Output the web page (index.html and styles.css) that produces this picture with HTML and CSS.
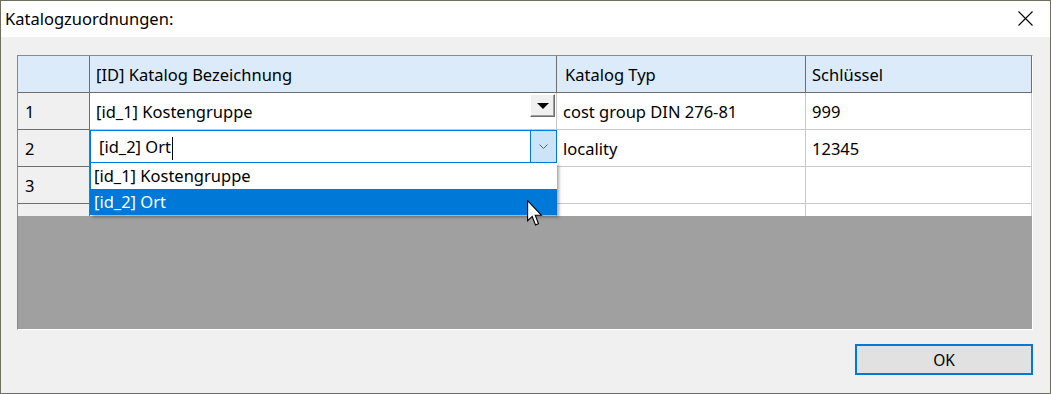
FILE: index.html
```html
<!DOCTYPE html>
<html lang="de">
<head>
<meta charset="UTF-8" />
<title>Katalogzuordnungen</title>
<link rel="stylesheet" href="styles.css">
</head>
<body>
<div class="window">
  <div class="titlebar">
    <span class="title">Katalogzuordnungen:</span>
    <svg class="close" width="15" height="15" viewBox="0 0 15 15"><path d="M0.5 0.5 L14.5 14.5 M14.5 0.5 L0.5 14.5" stroke="#000" stroke-width="1.1" fill="none"/></svg>
  </div>
  <div class="content">
    <div class="grid">
      <div class="row head">
        <div class="cell rh"></div>
        <div class="cell c1">[ID] Katalog Bezeichnung</div>
        <div class="cell c2">Katalog Typ</div>
        <div class="cell c3">Schlüssel</div>
      </div>
      <div class="row">
        <div class="cell rh">1</div>
        <div class="cell c1">[id_1] Kostengruppe
          <div class="drop-btn"><span class="tri"></span></div>
        </div>
        <div class="cell c2">cost group DIN 276-81</div>
        <div class="cell c3">999</div>
      </div>
      <div class="row">
        <div class="cell rh">2</div>
        <div class="cell c1 editing">
          <div class="editor">
            <span class="edit-text">[id_2] Ort<span class="caret"></span></span>
            <div class="edit-btn">
              <svg width="9" height="5" viewBox="0 0 9 5"><path d="M0.5 0.5 L4.5 4.5 L8.5 0.5" stroke="#606060" stroke-width="1" fill="none"/></svg>
            </div>
          </div>
          <div class="popup">
            <div class="item">[id_1] Kostengruppe</div>
            <div class="item selected">[id_2] Ort</div>
          </div>
        </div>
        <div class="cell c2">locality</div>
        <div class="cell c3">12345</div>
      </div>
      <div class="row">
        <div class="cell rh">3</div>
        <div class="cell c1"></div>
        <div class="cell c2"></div>
        <div class="cell c3"></div>
      </div>
      <div class="row stub">
        <div class="cell rh"></div>
        <div class="cell c1"></div>
        <div class="cell c2"></div>
        <div class="cell c3"></div>
      </div>
      <div class="empty"></div>
    </div>
    <div class="footer">
      <button class="ok">OK</button>
    </div>
  </div>
  <svg class="cursor" width="17" height="28" viewBox="0 0 14 23"><path d="M0.5 0.5 L0.5 17 L4.3 13.5 L7 20.5 L9.5 19.5 L6.8 12.5 L11.8 12.5 Z" fill="#fff" stroke="#000" stroke-width="0.9" stroke-linejoin="miter"/></svg>
</div>
</body>
</html>
```

FILE: styles.css
```css
body{margin:0;padding:0;font-family:"Noto Sans","Liberation Sans",sans-serif;color:#000;}
.window{position:relative;width:1051px;height:394px;box-sizing:border-box;border:1px solid #6f6f5f;background:#f0f0f0;display:flex;flex-direction:column;}
.titlebar{height:36px;background:#fff;display:flex;justify-content:space-between;align-items:flex-start;padding:0 17px 0 4px;}
.title{font-size:16.5px;line-height:36px;}
.close{margin-top:10px;}
.content{flex:1;display:flex;flex-direction:column;padding:18px 17px 0 16px;}
.grid{height:275px;box-sizing:border-box;border-left:1px solid #8a8a8a;border-top:1px solid #8a8a8a;border-right:1px solid #fff;border-bottom:1px solid #fff;background:#a0a0a0;display:flex;flex-direction:column;}
.row{display:flex;height:37px;flex:none;}
.row.stub{height:12px;overflow:hidden;}
.cell{box-sizing:border-box;height:37px;border-right:1px solid #c8c8c8;border-bottom:1px solid #c8c8c8;background:#fff;font-size:16.5px;line-height:34px;padding:2px 0 0 6px;white-space:nowrap;}
.rh{width:72px;background:#f0f0f0;border-right-color:#6e6e6e;border-bottom-color:#6e6e6e;padding-left:7px;}
.c1{width:467px;position:relative;}
.c2{width:249px;}
.c3{width:226px;}
.head .cell{background:#dbebfa;border-right-color:#6e6e6e;border-bottom-color:#6e6e6e;}
.head .c2{padding-left:8px;}
.drop-btn{position:absolute;top:1px;right:1px;width:25px;height:23px;box-sizing:border-box;background:#f0f0f0;border:1px solid;border-color:#fff #6e6e6e #6e6e6e #fff;box-shadow:inset -1px -1px 0 #a0a0a0;display:flex;align-items:center;justify-content:center;}
.tri{width:0;height:0;border-left:6px solid transparent;border-right:6px solid transparent;border-top:6px solid #000;}
.editing{z-index:2;}
.editor{position:absolute;left:0;top:0;width:467px;height:34px;box-sizing:border-box;border:1px solid #0078d7;border-bottom-width:2px;background:#fff;display:flex;}
.edit-text{flex:1;padding:1px 0 0 8px;line-height:30px;}
.caret{display:inline-block;width:1px;height:23px;background:#000;vertical-align:middle;margin-left:1px;}
.edit-btn{width:25px;background:#cce4f7;border-left:1px solid #0078d7;display:flex;align-items:center;justify-content:center;}
.popup{position:absolute;left:0;top:33px;width:467px;background:#fff;box-shadow:2px 2px 3px rgba(0,0,0,0.35);border-left:1px solid #0078d7;box-sizing:border-box;}
.item{height:26px;line-height:26px;padding-left:3px;font-size:16.5px;}
.item.selected{background:#0078d7;color:#fff;}
.empty{flex:1;}
.footer{display:flex;justify-content:flex-end;padding-top:14px;}
.ok{width:178px;height:31px;box-sizing:border-box;border:2px solid #0078d7;background:#e1e1e1;font-family:"Noto Sans","Liberation Sans",sans-serif;font-size:15.5px;color:#000;padding:0;}
.cursor{position:absolute;left:526px;top:199px;z-index:5;}
```
